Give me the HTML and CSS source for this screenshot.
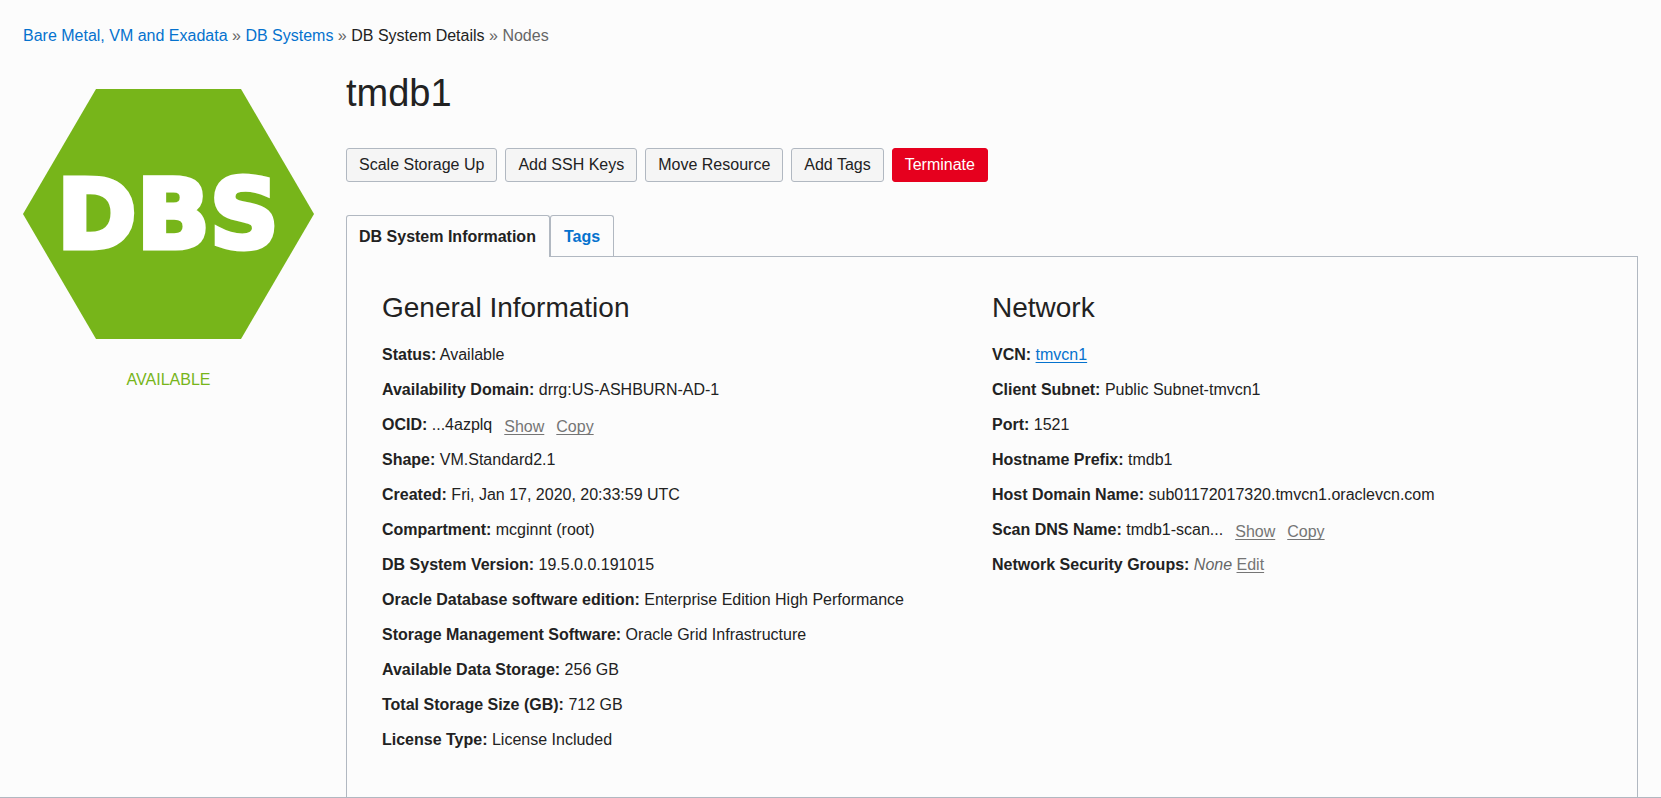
FILE: index.html
```html
<!DOCTYPE html>
<html lang="en">
<head>
<meta charset="utf-8">
<title>tmdb1 - DB System Details</title>
<link rel="stylesheet" href="styles.css">
</head>
<body>
<nav class="breadcrumb" aria-label="Breadcrumb">
  <a href="#">Bare Metal, VM and Exadata</a> <span class="sep">»</span>
  <a href="#">DB Systems</a> <span class="sep">»</span>
  <span>DB System Details</span> <span class="sep">»</span>
  <span class="muted">Nodes</span>
</nav>
<div class="layout">
  <aside class="status">
    <svg class="badge" viewBox="0 0 291 250" role="img" aria-label="DBS">
      <polygon points="73,0 218,0 291,125 218,250 73,250 0,125"/>
      <text x="145" y="159" text-anchor="middle">DBS</text>
    </svg>
    <p class="state">AVAILABLE</p>
  </aside>
  <main class="details">
    <h1 class="title">tmdb1</h1>
    <div class="actions">
      <button class="btn" type="button">Scale Storage Up</button>
      <button class="btn" type="button">Add SSH Keys</button>
      <button class="btn" type="button">Move Resource</button>
      <button class="btn" type="button">Add Tags</button>
      <button class="btn danger" type="button">Terminate</button>
    </div>
    <div class="tabs" role="tablist">
      <button class="tab active" type="button" role="tab" aria-selected="true">DB System Information</button>
      <button class="tab" type="button" role="tab" aria-selected="false">Tags</button>
    </div>
    <div class="panel" role="tabpanel">
      <section>
        <h2 class="heading">General Information</h2>
        <ul class="facts">
          <li><b>Status:</b> Available</li>
          <li><b>Availability Domain:</b> drrg:US-ASHBURN-AD-1</li>
          <li><b>OCID:</b> ...4azplq<span class="links"><a href="#">Show</a><a href="#">Copy</a></span></li>
          <li><b>Shape:</b> VM.Standard2.1</li>
          <li><b>Created:</b> Fri, Jan 17, 2020, 20:33:59 UTC</li>
          <li><b>Compartment:</b> mcginnt (root)</li>
          <li><b>DB System Version:</b> 19.5.0.0.191015</li>
          <li><b>Oracle Database software edition:</b> Enterprise Edition High Performance</li>
          <li><b>Storage Management Software:</b> Oracle Grid Infrastructure</li>
          <li><b>Available Data Storage:</b> 256 GB</li>
          <li><b>Total Storage Size (GB):</b> 712 GB</li>
          <li><b>License Type:</b> License Included</li>
        </ul>
      </section>
      <section>
        <h2 class="heading">Network</h2>
        <ul class="facts">
          <li><b>VCN:</b> <a class="primary" href="#">tmvcn1</a></li>
          <li><b>Client Subnet:</b> Public Subnet-tmvcn1</li>
          <li><b>Port:</b> 1521</li>
          <li><b>Hostname Prefix:</b> tmdb1</li>
          <li><b>Host Domain Name:</b> sub01172017320.tmvcn1.oraclevcn.com</li>
          <li><b>Scan DNS Name:</b> tmdb1-scan...<span class="links"><a href="#">Show</a><a href="#">Copy</a></span></li>
          <li><b>Network Security Groups:</b> <i class="muted">None</i> <a href="#">Edit</a></li>
        </ul>
      </section>
    </div>
  </main>
</div>
</body>
</html>
```
FILE: styles.css
```css
* {
  box-sizing: border-box;
}

body {
  display: flex;
  flex-direction: column;
  min-height: 100vh;
  margin: 0;
  padding: 24px 23px 0;
  border-bottom: 1px solid #b1b8c1;
  background: #fcfcfc;
  color: #222;
  font: 16px/24px "Liberation Sans", Arial, sans-serif;
}

.breadcrumb a {
  color: #0572ce;
  text-decoration: none;
}

.sep,
.muted {
  color: #666;
}

.layout {
  display: flex;
  flex: 1;
  gap: 32px;
}

.status {
  flex: none;
  width: 291px;
  padding-top: 41px;
}

.badge {
  display: block;
  width: 100%;
  fill: #77b51a;
}

.badge text {
  fill: #fff;
  stroke: #fff;
  stroke-width: 5px;
  font: bold 96px "DejaVu Sans", sans-serif;
}

.state {
  margin: 29px 0 0;
  color: #77b51a;
  text-align: center;
}

.details {
  display: flex;
  flex: 1;
  flex-direction: column;
  min-width: 0;
}

.title {
  margin: 21px 0 31px;
  font-size: 38px;
  font-weight: normal;
  line-height: 48px;
}

.actions {
  display: flex;
  flex-wrap: wrap;
  gap: 8px;
  margin-bottom: 33px;
}

.btn {
  height: 34px;
  padding: 0 12px;
  border: 1px solid #b1b8c1;
  border-radius: 3px;
  background: #f5f5f5;
  color: #222;
  font: inherit;
}

.btn.danger {
  border-color: #e6001e;
  background: #e6001e;
  color: #fff;
}

.tabs {
  z-index: 1;
  display: flex;
  margin-bottom: -1px;
}

.tab {
  height: 42px;
  padding: 0 13px;
  border: 1px solid #b1b8c1;
  border-bottom: 0;
  border-radius: 3px 3px 0 0;
  background: #fcfcfc;
  box-shadow: inset 0 -1px #b1b8c1;
  color: #0572ce;
  font: inherit;
  font-weight: bold;
}

.tab.active {
  padding: 0 13px 0 12px;
  box-shadow: none;
  color: #222;
}

.panel {
  display: grid;
  flex: 1;
  grid-template-columns: 1fr 1fr;
  padding: 34px 35px;
  border: 1px solid #b1b8c1;
  border-bottom: 0;
}

.heading {
  margin: 0 0 12px;
  font-size: 28px;
  font-weight: normal;
  line-height: 34px;
}

.facts {
  margin: 0;
  padding: 0;
  line-height: 35px;
  list-style: none;
}

.facts a {
  color: #757575;
  text-decoration-skip-ink: none;
  text-underline-offset: 2px;
}

.facts a.primary {
  color: #0572ce;
}

.links {
  display: inline-flex;
  gap: 12px;
  margin-left: 12px;
  line-height: 20px;
  vertical-align: -2px;
}
```
